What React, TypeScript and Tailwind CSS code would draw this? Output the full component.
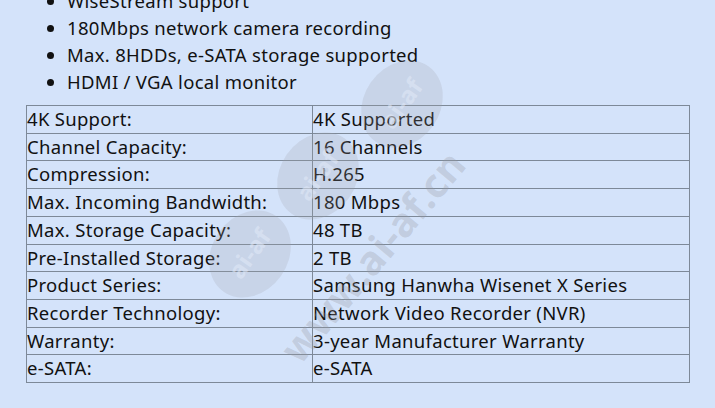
import React from 'react'

const features = [
  'WiseStream support',
  '180Mbps network camera recording',
  'Max. 8HDDs, e-SATA storage supported',
  'HDMI / VGA local monitor',
]

const specs: [string, string][] = [
  ['4K Support:', '4K Supported'],
  ['Channel Capacity:', '16 Channels'],
  ['Compression:', 'H.265'],
  ['Max. Incoming Bandwidth:', '180 Mbps'],
  ['Max. Storage Capacity:', '48 TB'],
  ['Pre-Installed Storage:', '2 TB'],
  ['Product Series:', 'Samsung Hanwha Wisenet X Series'],
  ['Recorder Technology:', 'Network Video Recorder (NVR)'],
  ['Warranty:', '3-year Manufacturer Warranty'],
  ['e-SATA:', 'e-SATA'],
]

function Watermark() {
  // faint site stamp laid over the table
  return (
    <svg className="absolute inset-0 pointer-events-none" width="715" height="408" viewBox="0 0 715 408">
      {[
        [402, 104],
        [318, 176],
        [250, 254],
      ].map(([cx, cy]) => (
        <g key={cx} transform={`rotate(-55 ${cx} ${cy})`}>
          <ellipse cx={cx} cy={cy} rx="46" ry="38" fill="rgba(160,160,168,0.22)" />
          <text x={cx} y={cy + 8} textAnchor="middle" fontFamily="'Noto Sans', sans-serif" fontWeight="700" fontSize="24" fill="rgba(226,234,248,0.55)">
            ai-af
          </text>
        </g>
      ))}
      <text
        x="384"
        y="266"
        transform="rotate(-50 384 266)"
        textAnchor="middle"
        fontFamily="'Noto Sans', sans-serif"
        fontWeight="700"
        fontSize="40"
        fill="rgba(150,152,160,0.3)"
      >
        www.ai-af.cn
      </text>
    </svg>
  )
}

export default function App() {
  return (
    <div className="relative h-[408px] w-[715px] overflow-hidden bg-[#d4e3fa] font-['Noto_Sans',sans-serif] text-[18.5px] tracking-[0.3px] text-[#111]">
      <ul className="mt-[-11.7px] list-disc pl-[67px] leading-[26.8px]">
        {features.map((f) => (
          <li key={f}>{f}</li>
        ))}
      </ul>
      <table className="mt-[9.5px] ml-[26px] w-[664px] border-collapse border border-[#7d8998]">
        <tbody>
          {specs.map(([k, v]) => (
            <tr key={k}>
              <td className="w-[286px] border border-[#7d8998] p-0 leading-[26.7px]">{k}</td>
              <td className="border border-[#7d8998] p-0 leading-[26.7px]">{v}</td>
            </tr>
          ))}
        </tbody>
      </table>
      <Watermark />
    </div>
  )
}
